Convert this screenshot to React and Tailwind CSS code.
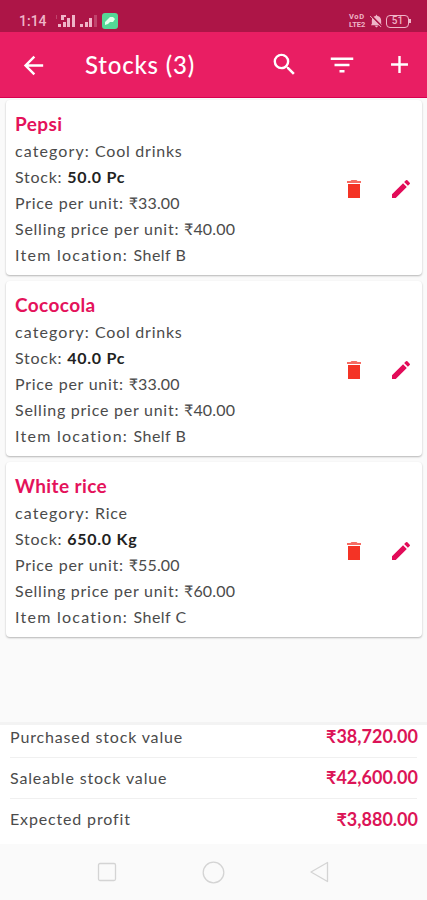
import { MdAdd, MdArrowBack, MdEdit, MdFilterList, MdSearch } from "react-icons/md";

const stocks = [
  { id: 1, name: "Pepsi", category: "Cool drinks", stock: "50.0 Pc", price: "₹33.00", selling: "₹40.00", location: "Shelf B" },
  { id: 2, name: "Cococola", category: "Cool drinks", stock: "40.0 Pc", price: "₹33.00", selling: "₹40.00", location: "Shelf B" },
  { id: 3, name: "White rice", category: "Rice", stock: "650.0 Kg", price: "₹55.00", selling: "₹60.00", location: "Shelf C" },
];

const totals = [
  { label: "Purchased stock value", value: "₹38,720.00" },
  { label: "Saleable stock value", value: "₹42,600.00" },
  { label: "Expected profit", value: "₹3,880.00" },
];

function StatusBar() {
  return (
    <div className="flex h-8 items-center bg-[#ad1547] pt-2.5 pr-[16px] pl-[19px] text-[#efb5c8]">
      <span className="w-[37px] font-['Roboto'] text-[14px] leading-none font-medium">1:14</span>
      {/* Signal strength, both SIMs */}
      <svg className="mr-[4px] h-[14px] w-[42px]" viewBox="0 0 42 14" fill="currentColor">
        <path d="M2 10h3v3H2zM7 8h3v5H7zM11 4h3v9h-3zM16 1h3v12h-3zM5 1h5v2H8v3H5zM24 10h3v3h-3zM29 8h3v5h-3zM33 4h3v9h-3z" />
        <path d="M0 1h1v4H0zM38 1h3v12h-3z" opacity=".3" />
      </svg>
      <svg className="h-4 w-4" viewBox="0 0 16 16">
        <rect width="16" height="16" rx="3" fill="#54d796" />
        <path d="M3 12V9l3-3 2-2h3l2 2-2 3H8l-2 2z" fill="#e4ffed" />
      </svg>
      <div className="ml-auto flex items-center gap-[3px]">
        <span className="flex w-[18px] flex-col font-['Roboto'] text-[7.500px] leading-[8px] font-bold">
          <span className="tracking-[0.6px]">VoD</span>
          <span>LTE2</span>
        </span>
        <svg className="h-[14px] w-[13px]" viewBox="0 0 14 14">
          <path d="M7 0l1 1.500c3 .5 4 2.500 4 5V10l1 1.500H1L2 10V6.500c0-2.500 1-4.500 4-5zM5 12h4L7 14z" fill="currentColor" />
          <path d="M1 1l12 12" stroke="#ad1547" strokeWidth="2" />
          <path d="M0 1.500l12 12" stroke="currentColor" />
        </svg>
        <div className="flex items-center">
          <span className="flex h-[13px] w-[23px] items-center justify-center rounded-[4px] border border-current font-['Roboto'] text-[10px] leading-none font-medium">
            51
          </span>
          <span className="h-1 w-0.5 bg-current" />
        </div>
      </div>
    </div>
  );
}

function Header() {
  return (
    <header className="flex h-[66px] items-center border-b border-[#d8004f] bg-[#e91e63] pt-px pr-[13px] pl-[19px] text-white">
      <MdArrowBack className="size-[29px]" />
      <h1 className="ml-[37px] text-[24px] leading-none font-medium tracking-[0.8px]">Stocks (3)</h1>
      <div className="ml-auto flex gap-[28px]">
        <MdSearch className="size-[29px]" />
        <MdFilterList className="size-[30px]" />
        <MdAdd className="size-[29px]" />
      </div>
    </header>
  );
}

function TrashIcon() {
  return (
    <svg className="size-6" viewBox="0 0 24 24">
      <path d="M6 7h12v14H6z" fill="#f43325" />
      <path d="M15.500 4l-1-1h-5l-1 1H5v2h14V4z" fill="#f66c63" />
    </svg>
  );
}

function StockCard({ item }) {
  return (
    <div className="flex h-[175px] items-center justify-between rounded-[4px] bg-white px-[9px] shadow-[0_1px_2px_rgba(0,0,0,0.28)]">
      <div className="mt-[3px] text-[16px] leading-[26px] tracking-[0.75px] text-[#4b4b4b]">
        <h2 className="mb-px text-[19px] leading-[27px] font-bold tracking-[0.4px] text-[#e4125b]">{item.name}</h2>
        <p>
          <span className="tracking-[1.1px]">category: </span>
          {item.category}
        </p>
        <p>
          Stock: <b className="text-[#222]">{item.stock}</b>
        </p>
        <p>
          Price per unit: <span className="tracking-[0.15px]">{item.price}</span>
        </p>
        <p>
          Selling price per unit: <span className="tracking-[0.15px]">{item.selling}</span>
        </p>
        <p>
          <span className="tracking-[1.25px]">Item location: </span>
          <span className="tracking-[0.5px]">{item.location}</span>
        </p>
      </div>
      <div className="mt-[3px] flex gap-[23px]">
        <TrashIcon />
        <MdEdit className="size-6 text-[#e20c59]" />
      </div>
    </div>
  );
}

export default function App() {
  return (
    <div className="flex h-[900px] w-[427px] flex-col overflow-hidden bg-[#fafafa] font-['Lato',sans-serif]">
      <StatusBar />
      <Header />

      {/* Stock list */}
      <main className="flex flex-1 flex-col gap-[6px] pt-[2px] pr-[5px] pl-[6px]">
        {stocks.map((item) => (
          <StockCard key={item.id} item={item} />
        ))}
      </main>

      {/* Totals */}
      <section className="h-[122px] border-t-[3px] border-[#f3f3f3] bg-white px-[10px]">
        {totals.map((row) => (
          <div
            key={row.label}
            className="flex h-[41px] items-center justify-between border-b border-[#f0f0f0] pb-px first:h-[33px] first:pb-[9px] last:border-0"
          >
            <span className="text-[16px] tracking-[0.85px] text-[#4b4b4b]">{row.label}</span>
            <span className="-mr-px text-[18px] font-bold text-[#dc1457]">{row.value}</span>
          </div>
        ))}
      </section>

      {/* System navigation */}
      <nav className="flex h-14 items-center justify-center gap-[84px] text-[#d4d4d4]">
        <svg className="size-[22px]" viewBox="0 0 22 22" fill="none" stroke="currentColor" strokeWidth="1.3">
          <rect x="2.500" y="2.500" width="17" height="17" rx="1.500" />
        </svg>
        <svg className="size-[23px]" viewBox="0 0 23 23" fill="none" stroke="currentColor" strokeWidth="1.3">
          <circle cx="11.500" cy="11.500" r="10.300" />
        </svg>
        <svg className="size-[22px]" viewBox="0 0 22 22" fill="none" stroke="currentColor" strokeWidth="1.3" strokeLinejoin="round">
          <path d="M18.500 1.500v19L2 11z" />
        </svg>
      </nav>
    </div>
  );
}
